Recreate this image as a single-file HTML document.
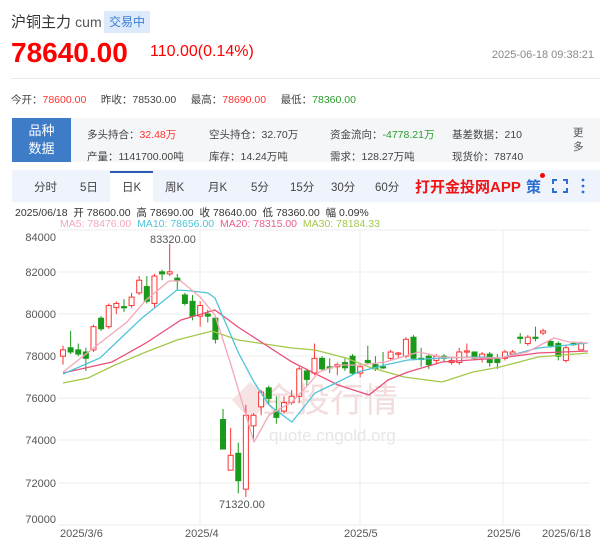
<!DOCTYPE html>
<html><head><meta charset="utf-8">
<style>
*{margin:0;padding:0;box-sizing:border-box}
body{width:600px;height:538px;background:#fff;font-family:"Liberation Sans","Noto Sans CJK SC",sans-serif;position:relative;overflow:hidden;color:#333}
.a{position:absolute;white-space:nowrap}
</style></head><body>
<div class="a" style="left:11px;top:11px;font-size:15px;color:#333">沪铜主力 <span style="font-size:14px;color:#555">cum</span></div>
<div class="a" style="left:104px;top:11px;width:46px;height:22px;background:#dceafb;color:#3d7cd0;font-size:12px;line-height:22px;text-align:center">交易中</div>
<div class="a" style="left:11px;top:37px;font-size:28px;font-weight:bold;color:#f00">78640.00</div>
<div class="a" style="left:150px;top:43px;font-size:16px;color:#f00">110.00(0.14%)</div>
<div class="a" style="right:6px;top:49px;font-size:11px;color:#888">2025-06-18 09:38:21</div>
<div class="a" style="left:11px;top:78px;width:589px;height:1px;background:#e8e8e8"></div>
<div class="a" style="left:11px;top:92px;font-size:10.5px;color:#444">今开：<span style="color:#f33">78600.00</span>&nbsp;&nbsp;&nbsp;&nbsp;&nbsp;昨收：78530.00&nbsp;&nbsp;&nbsp;&nbsp;&nbsp;最高：<span style="color:#f33">78690.00</span>&nbsp;&nbsp;&nbsp;&nbsp;&nbsp;最低：<span style="color:#2a9d2a">78360.00</span></div>
<div class="a" style="left:12px;top:118px;width:588px;height:44px;background:#f5f6f8"></div>
<div class="a" style="left:12px;top:118px;width:59px;height:44px;background:#3f7cc8;color:#fff;font-size:13px;line-height:18px;text-align:center;padding-top:4px">品种<br>数据</div>
<div class="a" style="left:87px;top:124px;font-size:10.5px;line-height:22px;color:#444">多头持合：<span style="color:#f33">32.48万</span><br>产量：1141700.00吨</div>
<div class="a" style="left:209px;top:124px;font-size:10.5px;line-height:22px;color:#444">空头持仓：32.70万<br>库存：14.24万吨</div>
<div class="a" style="left:330px;top:124px;font-size:10.5px;line-height:22px;color:#444">资金流向：<span style="color:#2a9d2a">-4778.21万</span><br>需求：128.27万吨</div>
<div class="a" style="left:452px;top:124px;font-size:10.5px;line-height:22px;color:#444">基差数据：210<br>现货价：78740</div>
<div class="a" style="left:573px;top:126px;font-size:10.5px;line-height:14px;color:#555;width:12px">更<br>多</div>
<div class="a" style="left:12px;top:170px;width:588px;height:32px;background:#eef3fc"></div>
<div class="a" style="left:110px;top:171px;width:43px;height:31px;background:#fff;border-top:2px solid #2d5bb0"></div>
<div class="a" style="left:0;top:179px;font-size:11.5px;color:#444;width:420px">
<span class="a" style="left:34px">分时</span><span class="a" style="left:80px">5日</span><span class="a" style="left:122px">日K</span><span class="a" style="left:165px">周K</span><span class="a" style="left:208px">月K</span><span class="a" style="left:251px">5分</span><span class="a" style="left:290px">15分</span><span class="a" style="left:331px">30分</span><span class="a" style="left:375px">60分</span></div>
<div class="a" style="left:415px;top:176px;font-size:15px;font-weight:bold;color:#f01414">打开金投网APP</div>
<div class="a" style="left:526px;top:176px;font-size:15px;font-weight:bold;color:#2d6fd0">策</div>
<div class="a" style="left:540px;top:173px;width:5px;height:5px;border-radius:50%;background:#f00"></div>
<svg class="a" style="left:552px;top:179px" width="16" height="14"><path d="M1 5V1h4M11 1h4v4M15 9v4h-4M5 13H1V9" stroke="#2d6fd0" stroke-width="2" fill="none"/></svg>
<svg class="a" style="left:580px;top:178px" width="6" height="16"><circle cx="3" cy="2" r="1.4" fill="#2d6fd0"/><circle cx="3" cy="8" r="1.4" fill="#2d6fd0"/><circle cx="3" cy="14" r="1.4" fill="#2d6fd0"/></svg>
<div class="a" style="left:15px;top:205px;font-size:10.5px;color:#333">2025/06/18&nbsp; 开 78600.00&nbsp; 高 78690.00&nbsp; 收 78640.00&nbsp; 低 78360.00&nbsp; 幅 0.09%</div>
<div class="a" style="left:60px;top:218px;font-size:10.5px"><span style="color:#f4a7b9">MA5: 78476.00</span>&nbsp;&nbsp;<span style="color:#4fc3d9">MA10: 78656.00</span>&nbsp;&nbsp;<span style="color:#e8608a">MA20: 78315.00</span>&nbsp;&nbsp;<span style="color:#a3c84a">MA30: 78184.33</span></div>
<svg id="ch" class="a" style="left:0;top:0" width="600" height="538">
<g stroke="#eee" stroke-width="1">
<line x1="58" y1="230" x2="590" y2="230"/><line x1="58" y1="272" x2="590" y2="272"/><line x1="58" y1="314" x2="590" y2="314"/><line x1="58" y1="356" x2="590" y2="356"/><line x1="58" y1="398" x2="590" y2="398"/><line x1="58" y1="440" x2="590" y2="440"/><line x1="58" y1="483" x2="590" y2="483"/><line x1="58" y1="525" x2="590" y2="525"/>
<line x1="200" y1="230" x2="200" y2="525"/><line x1="360" y1="230" x2="360" y2="525"/><line x1="503" y1="230" x2="503" y2="525"/>
</g>
<g font-size="11" fill="#555" font-family="Liberation Sans,sans-serif" text-anchor="end">
<text x="56" y="241">84000</text><text x="56" y="276">82000</text><text x="56" y="318">80000</text><text x="56" y="360">78000</text><text x="56" y="402">76000</text><text x="56" y="444">74000</text><text x="56" y="487">72000</text><text x="56" y="523">70000</text>
</g>
<g font-size="11" fill="#555" font-family="Liberation Sans,sans-serif">
<text x="60" y="537">2025/3/6</text><text x="185" y="537">2025/4</text><text x="344" y="537">2025/5</text><text x="487" y="537">2025/6</text><text x="542" y="537">2025/6/18</text>
<text x="150" y="243">83320.00</text><text x="219" y="508">71320.00</text>
</g>
<path d="M232 400 L250 382 L272 400 L250 420 Z" fill="#f6e4e4"/>
<text x="262" y="412" font-size="34" fill="#f3dcdc" font-family="Noto Sans CJK SC,sans-serif">金投行情</text>
<text x="269" y="441" font-size="17" fill="#e6e6e6" font-family="Liberation Sans,sans-serif">quote.cngold.org</text>
<g id="cd"></g>
<g fill="none" stroke-width="1.3">
<polyline stroke="#a3c84a" points="63,383 88,378 115,365 146,352 177,340 212,331 238,340 292,348 315,350 346,358 369,367 404,377 442,382 473,372 500,367 538,357 588,353"/>
<polyline stroke="#e8507a" points="63,373 112,362 146,343 181,320 215,310 238,327 292,362 338,385 369,395 388,380 408,372 442,362 500,358 538,353 588,351"/>
<polyline stroke="#4fc3d9" points="63,374 100,358 142,318 177,290 192,291 208,293 215,298 238,352 254,382 269,405 292,422 315,393 338,382 358,372 385,365 408,360 442,358 481,357 500,358 538,348 588,343"/>
<polyline stroke="#f4a7b9" points="63,372 100,343 127,322 146,300 169,281 181,281 200,297 215,315 231,365 254,442 269,415 292,402 308,385 319,372 338,365 360,365 385,362 419,352 442,357 481,358 500,358 527,352 554,338 569,342 588,343"/>
</g>
</svg>
<script>
var d=[[78.0,78.3,78.5,77.6],[78.4,78.2,79.2,78.1],[78.3,78.1,78.6,78.0],[78.2,77.9,78.4,77.3],[78.3,79.4,79.5,78.2],[79.8,79.3,79.9,79.2],[79.4,80.4,80.5,79.3],[80.3,80.5,80.6,80.0],[80.35,80.3,80.7,80.1],[80.4,80.8,81.0,80.3],[81.0,81.6,81.8,80.9],[81.3,80.6,81.8,80.5],[80.5,81.8,81.9,80.3],[82.0,81.9,82.1,81.6],[81.9,82.0,83.32,81.8],[81.7,81.6,81.9,81.1],[80.9,80.5,81.0,80.4],[80.6,79.9,80.9,79.7],[79.9,80.4,80.6,79.4],[80.0,79.9,80.2,79.6],[79.8,78.8,79.9,78.6],[75.0,73.6,75.5,73.6],[72.6,73.3,74.6,72.6],[73.4,72.1,73.9,71.5],[71.7,75.2,75.7,71.32],[74.7,75.2,75.3,74.0],[75.6,76.3,76.4,75.2],[76.5,76.0,76.6,75.7],[75.4,75.1,76.1,74.8],[75.4,75.8,76.1,75.3],[75.8,76.1,76.4,75.7],[76.1,77.4,77.5,75.8],[77.3,76.9,77.4,76.6],[77.2,77.9,78.6,77.1],[77.9,77.4,78.0,77.3],[77.5,77.45,77.9,77.2],[77.5,77.6,77.7,77.1],[77.7,77.45,77.9,77.3],[78.0,77.2,78.1,77.1],[77.2,77.5,77.6,77.0],[77.8,77.7,78.5,77.6],[77.6,77.4,78.0,77.3],[77.5,77.45,78.2,77.4],[77.9,78.2,78.3,77.8],[78.1,78.15,78.2,77.9],[78.0,78.8,78.9,77.9],[78.9,77.9,79.0,77.8],[77.9,77.85,78.4,77.5],[78.0,77.6,78.1,77.4],[77.8,78.0,78.1,77.6],[78.0,77.9,78.1,77.7],[77.7,77.8,77.9,77.6],[77.7,78.2,78.4,77.6],[78.2,78.25,78.6,77.9],[78.2,77.9,78.2,77.8],[77.9,78.1,78.2,77.7],[78.1,77.7,78.2,77.5],[77.9,77.7,78.1,77.4],[77.9,78.2,78.3,77.8],[78.1,78.2,78.3,78.0],[78.9,78.85,79.1,78.6],[78.6,78.9,79.0,78.5],[78.9,78.85,79.4,78.7],[79.1,79.2,79.3,79.0],[78.7,78.5,78.8,78.4],[78.6,78.0,78.7,77.8],[77.8,78.4,78.5,77.7],[78.6,78.55,78.7,78.5],[78.3,78.6,78.7,78.3]];
var y=function(v){return 314+(80-v)*21.1},s='';
d.forEach(function(c,i){var x=63+i*7.62,up=c[1]>=c[0],col=up?'#f33':'#1a9a1a';var t=y(Math.max(c[0],c[1])),b=y(Math.min(c[0],c[1]));if(b-t<1.2)b=t+1.2;
s+='<line x1="'+x+'" x2="'+x+'" y1="'+y(c[2])+'" y2="'+t+'" stroke="'+col+'"/><line x1="'+x+'" x2="'+x+'" y1="'+b+'" y2="'+y(c[3])+'" stroke="'+col+'"/>';
s+='<rect x="'+(x-2.5)+'" y="'+t+'" width="5" height="'+(b-t)+'" '+(up?'fill="#fff" stroke="#f33"':'fill="#1a9a1a" stroke="#1a9a1a"')+'/>';});
document.getElementById('cd').innerHTML=s;
</script>
</body></html>
